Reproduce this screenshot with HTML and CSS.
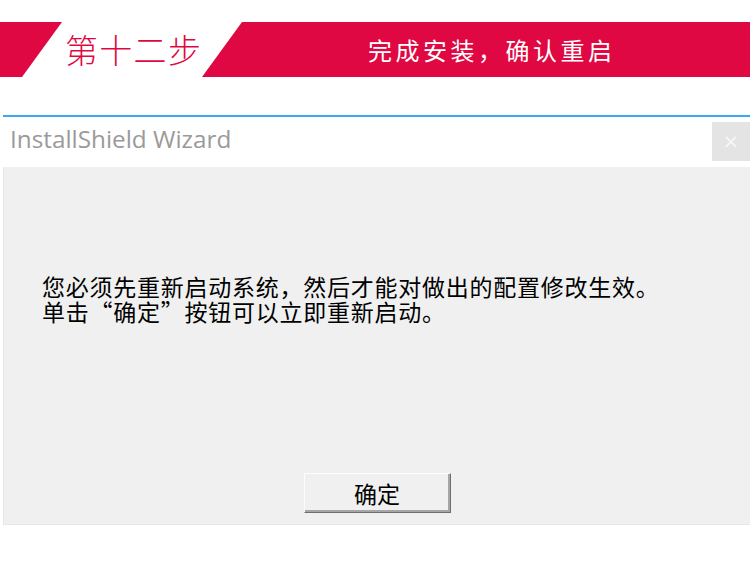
FILE: index.html
```html
<!DOCTYPE html>
<html lang="zh-CN">
<head>
  <meta charset="UTF-8">
  <meta name="viewport" content="width=device-width, initial-scale=1">
  <title>第十二步</title>
  <link rel="stylesheet" href="styles.css">
</head>
<body>
  <div class="step-bar">
    <div class="bar-left"></div>
    <h1 class="step-num">第十二步</h1>
    <div class="bar-right">
      <span class="step-title">完成安装，确认重启</span>
    </div>
  </div>

  <div class="dialog">
    <div class="dialog-head">
      <span class="dialog-title">InstallShield Wizard</span>
      <span class="close-btn">&times;</span>
    </div>
    <div class="dialog-body">
      <p class="msg">您必须先重新启动系统，然后才能对做出的配置修改生效。<br>单击“确定”按钮可以立即重新启动。</p>
      <button class="ok-btn">确定</button>
    </div>
  </div>
</body>
</html>
```

FILE: styles.css
```css
*{
  padding: 0;
  margin: 0;
  box-sizing: border-box;
}
body{
  background: #fff;
  width: 750px;
  height: 567px;
  overflow: hidden;
  font-family: "Noto Sans CJK SC", "Noto Sans", sans-serif;
}
.step-bar{
  display: flex;
  margin-top: 22px;
  height: 55px;
}
.bar-left{
  width: 62px;
  background: #df0842;
  clip-path: polygon(0 0, 100% 0, 22px 100%, 0 100%);
}
.step-num{
  width: 140px;
  padding-left: 3px;
  white-space: nowrap;
  color: #df0842;
  font-size: 33px;
  font-weight: 300;
  line-height: 55px;
  letter-spacing: 1.3px;
}
.bar-right{
  flex: 1;
  background: #df0842;
  clip-path: polygon(40px 0, 100% 0, 100% 100%, 0 100%);
  padding-left: 166px;
}
.step-title{
  color: #fff;
  font-size: 24px;
  line-height: 56px;
  letter-spacing: 3.5px;
}
.dialog{
  margin-top: 38px;
  margin-left: 3px;
  border-top: 2px solid #3ba8f2;
}
.dialog-head{
  display: flex;
  justify-content: space-between;
  align-items: flex-start;
  height: 50px;
  background: #fff;
}
.dialog-title{
  padding-left: 7px;
  padding-top: 5px;
  font-family: "Open Sans", sans-serif;
  font-size: 24.3px;
  color: #9a9a9a;
}
.close-btn{
  margin-top: 5px;
  width: 38px;
  height: 39px;
  background: #e4e4e4;
  color: #f7f7f7;
  font-family: "DejaVu Sans", sans-serif;
  font-size: 20px;
  line-height: 39px;
  text-align: center;
}
.dialog-body{
  display: flex;
  flex-direction: column;
  height: 358px;
  background: #f0f0f0;
  border-left: 1px solid #e6e6e6;
  border-bottom: 1px solid #e6e6e6;
  padding: 107px 0 11px 38px;
}
.msg{
  flex: 1;
  font-size: 23px;
  line-height: 25px;
  letter-spacing: 0.75px;
  color: #000;
}
.ok-btn{
  align-self: center;
  margin-left: -38px;
  width: 147px;
  height: 40px;
  background: #f0f0f0;
  border: 1px solid;
  border-color: #fcfcfc #6e6e6e #6e6e6e #fcfcfc;
  box-shadow: inset -2px -2px 0 #a6a6a6;
  font-family: "Noto Sans CJK SC", sans-serif;
  font-size: 23px;
  line-height: 36px;
  color: #000;
}
```
